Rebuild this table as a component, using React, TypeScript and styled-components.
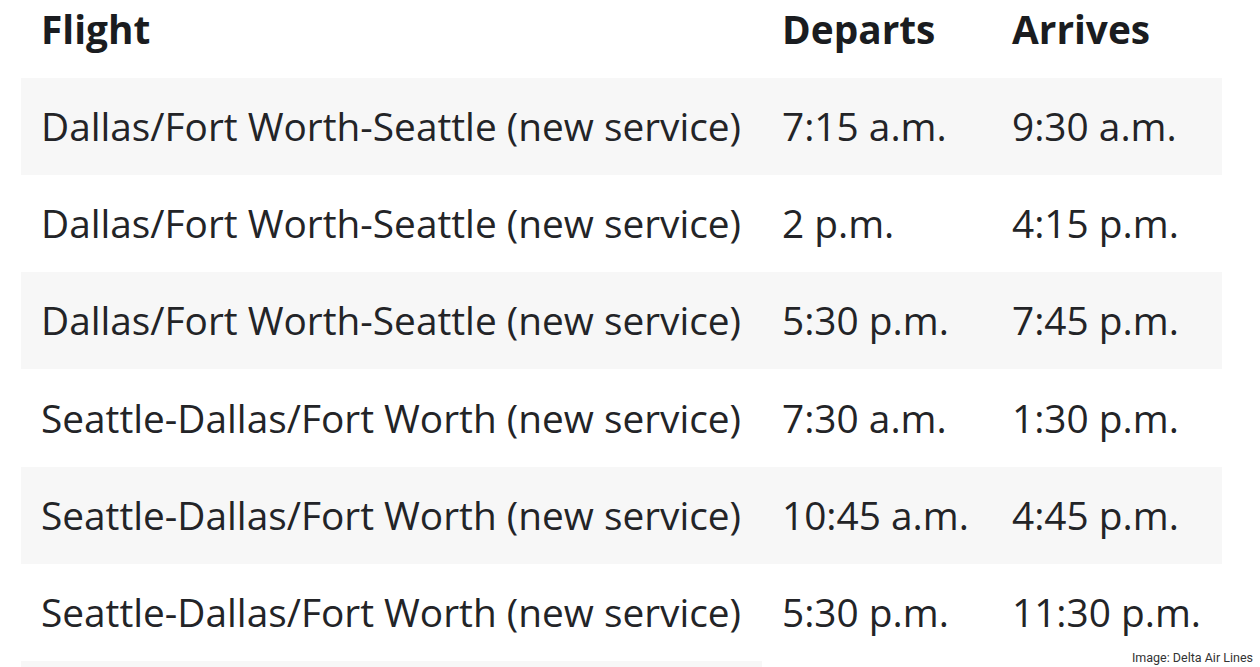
import React from "react";
import styled, { createGlobalStyle } from "styled-components";

const flights = [
  { route: "Dallas/Fort Worth-Seattle (new service)", departs: "7:15 a.m.", arrives: "9:30 a.m." },
  { route: "Dallas/Fort Worth-Seattle (new service)", departs: "2 p.m.", arrives: "4:15 p.m." },
  { route: "Dallas/Fort Worth-Seattle (new service)", departs: "5:30 p.m.", arrives: "7:45 p.m." },
  { route: "Seattle-Dallas/Fort Worth (new service)", departs: "7:30 a.m.", arrives: "1:30 p.m." },
  { route: "Seattle-Dallas/Fort Worth (new service)", departs: "10:45 a.m.", arrives: "4:45 p.m." },
  { route: "Seattle-Dallas/Fort Worth (new service)", departs: "5:30 p.m.", arrives: "11:30 p.m." },
];

const GlobalStyle = createGlobalStyle`
  html, body {
    margin: 0;
    padding: 0;
    background: #ffffff;
    overflow: hidden;
  }
`;

export default function App() {
  return (
    <>
      <GlobalStyle />
      <Frame>
        <Table>
          <HeaderRow>
            <HeadCell>Flight</HeadCell>
            <HeadCell>Departs</HeadCell>
            <HeadCell>Arrives</HeadCell>
          </HeaderRow>
          {flights.map((f, i) => (
            <Row key={i} $striped={i % 2 === 0}>
              <Cell>{f.route}</Cell>
              <Cell>{f.departs}</Cell>
              <Cell>{f.arrives}</Cell>
            </Row>
          ))}
          <TailRow />
        </Table>
        <Credit>Image: Delta Air Lines</Credit>
      </Frame>
    </>
  );
}

const Frame = styled.div`
  position: relative;
  width: 1260px;
  height: 667px;
  overflow: hidden;
  padding-left: 21px;
  box-sizing: border-box;
`;

const Table = styled.div`
  display: grid;
  width: 1201px;
  font-family: "Open Sans", "Liberation Sans", sans-serif;
  color: #232427;
`;

const HeaderRow = styled.div`
  display: grid;
  grid-template-columns: 741px 230px 230px;
  height: 77.5px;
  align-items: center;
`;

const HeadCell = styled.div`
  padding: 0 20px 18px;
  font-size: 38.8px;
  line-height: 1.2;
  font-weight: 700;
  color: #1a1c20;
  white-space: nowrap;
`;

const Row = styled.div<{ $striped: boolean }>`
  display: grid;
  grid-template-columns: 741px 230px 230px;
  height: 97.3px;
  align-items: center;
  background: ${({ $striped }) => ($striped ? "#f7f7f7" : "#ffffff")};
`;

const Cell = styled.div`
  padding: 0 20px;
  font-size: 38.8px;
  line-height: 1.2;
  font-weight: 400;
  white-space: nowrap;
`;

const TailRow = styled.div`
  width: 741px;
  height: 40px;
  background: #f7f7f7;
`;

const Credit = styled.div`
  position: absolute;
  right: 5px;
  bottom: 2px;
  font-family: Roboto, "Liberation Sans", sans-serif;
  font-size: 12.5px;
  color: #333333;
  background: #ffffff;
  padding: 0 2px;
`;
